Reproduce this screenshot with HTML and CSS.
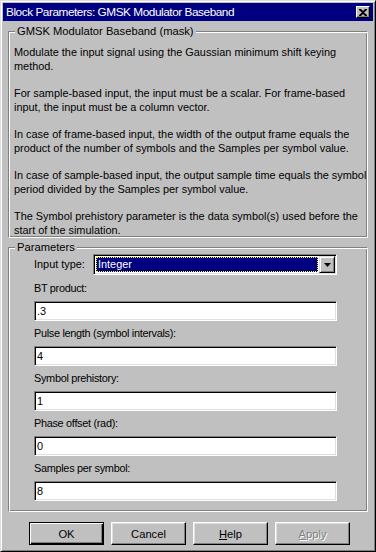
FILE: index.html
```html
<!DOCTYPE html>
<html lang="en">
<head>
    <meta charset="UTF-8">
    <title>Block Parameters: GMSK Modulator Baseband</title>
    <link rel="stylesheet" href="styles.css">
</head>
<body>
    <div class="window">
        <div class="titlebar">
            <span class="title">Block Parameters: GMSK Modulator Baseband</span>
            <span class="close">
                <svg width="8" height="7" viewBox="0 0 8 7"><path d="M0 0h2l2 2 2-2h2v1L5 3.5 8 6v1H6L4 5 2 7H0V6l3-2.5L0 1z" fill="#000"/></svg>
            </span>
        </div>

        <fieldset class="group desc">
            <legend>GMSK Modulator Baseband (mask)</legend>
            <p>Modulate the input signal using the Gaussian minimum shift keying<br>method.</p>
            <p>For sample-based input, the input must be a scalar. For frame-based<br>input, the input must be a column vector.</p>
            <p>In case of frame-based input, the width of the output frame equals the<br>product of the number of symbols and the Samples per symbol value.</p>
            <p>In case of sample-based input, the output sample time equals the symbol<br>period divided by the Samples per symbol value.</p>
            <p>The Symbol prehistory parameter is the data symbol(s) used before the<br>start of the simulation.</p>
        </fieldset>

        <fieldset class="group params">
            <legend>Parameters</legend>
            <div class="param-list">
                <div class="combo-row">
                    <label class="combo-label">Input type:</label>
                    <div class="combo">
                        <span class="combo-value"><span class="focus">Integer</span></span>
                        <span class="combo-btn">
                            <svg width="7" height="4" viewBox="0 0 7 4"><path d="M0 0h7L3.5 4z" fill="#000"/></svg>
                        </span>
                    </div>
                </div>
                <div class="field">
                    <label>BT product:</label>
                    <div class="edit">.3</div>
                </div>
                <div class="field">
                    <label>Pulse length (symbol intervals):</label>
                    <div class="edit">4</div>
                </div>
                <div class="field">
                    <label>Symbol prehistory:</label>
                    <div class="edit">1</div>
                </div>
                <div class="field">
                    <label>Phase offset (rad):</label>
                    <div class="edit">0</div>
                </div>
                <div class="field">
                    <label>Samples per symbol:</label>
                    <div class="edit">8</div>
                </div>
            </div>
        </fieldset>

        <div class="buttons">
            <button class="btn default">OK</button>
            <button class="btn">Cancel</button>
            <button class="btn"><u>H</u>elp</button>
            <button class="btn disabled"><u>A</u>pply</button>
        </div>
    </div>
</body>
</html>
```

FILE: styles.css
```css
* {
    margin: 0;
    padding: 0;
    box-sizing: border-box;
}
body {
    background: #c0c0c0;
    font-family: "Liberation Sans", Arial, sans-serif;
    font-size: 10.9px;
    color: #000;
}
.window {
    width: 376px;
    height: 552px;
    background: #c0c0c0;
    border: 1px solid;
    border-color: #dfdfdf #000 #000 #dfdfdf;
    box-shadow: inset 1px 1px #fff, inset -1px -1px #808080;
    padding: 2px;
    display: flex;
    flex-direction: column;
}
.titlebar {
    height: 18px;
    background: #000080;
    color: #fff;
    display: flex;
    align-items: center;
    justify-content: space-between;
    padding: 0 2px 0 3px;
}
.title {
    font-size: 11.8px;
    letter-spacing: -0.45px;
    white-space: nowrap;
}
.close {
    width: 14px;
    height: 12px;
    background: #c0c0c0;
    border: 1px solid;
    border-color: #fff #000 #000 #fff;
    box-shadow: inset -1px -1px #808080;
    display: flex;
    align-items: center;
    justify-content: center;
    margin-right: 1px;
}

/* group boxes */
.group {
    margin: 3px 5px 0;
    padding: 0 5px;
    border: 1px solid;
    border-color: #808080 #fff #fff #808080;
    box-shadow: inset 1px 1px #fff, inset -1px -1px #808080;
    min-width: 0;
}
.group legend {
    margin-left: 1px;
    padding: 0 2px;
    line-height: 14px;
    font-size: 11.2px;
    background: #c0c0c0;
    white-space: nowrap;
}
.desc {
    padding-top: 7px;
}
.desc p {
    line-height: 14px;
    white-space: nowrap;
    margin-bottom: 13px;
}
.desc p:last-child {
    margin-bottom: 0;
}
.params {
    margin-top: 2px;
}
.param-list {
    padding: 0 25px 10px 20px;
    display: flex;
    flex-direction: column;
    gap: 6px;
}
.combo-row {
    height: 22px;
    display: flex;
    align-items: flex-start;
}
.combo-label {
    width: 59px;
    line-height: 21px;
    white-space: nowrap;
}
.combo {
    flex: 1;
    height: 21px;
    background: #fff;
    border: 1px solid;
    border-color: #808080 #fff #fff #808080;
    box-shadow: inset 1px 1px #000, inset -1px -1px #dfdfdf;
    padding: 2px;
    display: flex;
}
.combo-value {
    flex: 1;
    background: #000080;
    color: #fff;
    display: flex;
}
.focus {
    flex: 1;
    outline: 1px dotted #ffff00;
    outline-offset: -1px;
    padding-left: 2px;
    line-height: 15px;
}
.combo-btn {
    width: 16px;
    margin: -1px -1px -1px 1px;
    background: #c0c0c0;
    border: 1px solid;
    border-color: #dfdfdf #000 #000 #dfdfdf;
    box-shadow: inset 1px 1px #fff, inset -1px -1px #808080;
    display: flex;
    align-items: center;
    justify-content: center;
}
.field label {
    display: block;
    line-height: 13px;
    margin-bottom: 6px;
    letter-spacing: -0.3px;
    white-space: nowrap;
}
.edit {
    height: 20px;
    background: #fff;
    border: 1px solid;
    border-color: #808080 #fff #fff #808080;
    box-shadow: inset 1px 1px #000, inset -1px -1px #dfdfdf;
    padding: 0 2px;
    line-height: 18px;
}

/* dialog buttons */
.buttons {
    display: flex;
    gap: 7px;
    margin-top: 10px;
    padding-left: 26px;
}
.btn {
    width: 75px;
    height: 23px;
    font: inherit;
    font-size: 11.2px;
    color: #000;
    background: #c0c0c0;
    border: 1px solid;
    border-color: #fff #000 #000 #fff;
    box-shadow: inset -1px -1px #808080, inset 1px 1px #dfdfdf;
}
.btn.default {
    border-color: #000;
    box-shadow: inset 1px 1px #fff, inset -1px -1px #000, inset -2px -2px #808080;
}
.btn.disabled {
    color: #808080;
    text-shadow: 1px 1px #fff;
}
```
